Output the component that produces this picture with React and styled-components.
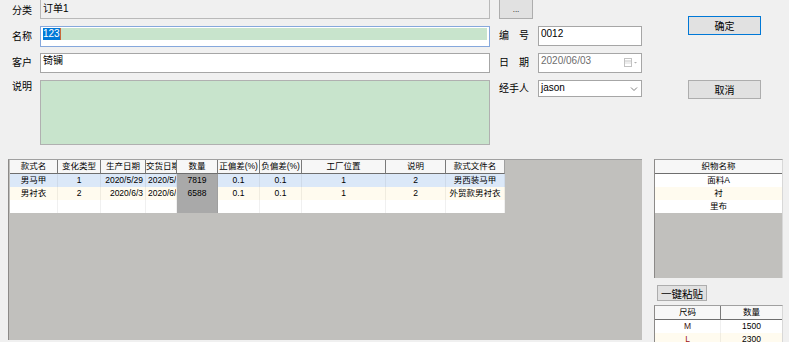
import React from 'react';
import styled, { createGlobalStyle } from 'styled-components';

const GlobalStyle = createGlobalStyle`
  html, body {
    margin: 0;
    padding: 0;
    background: #f0f0f0;
    overflow: hidden;
  }
  body {
    font-family: "Liberation Sans", "Noto Sans CJK SC", sans-serif;
    color: #000;
  }
  * {
    box-sizing: border-box;
  }
`;

const Window = styled.div`
  width: 789px;
  height: 342px;
  display: flex;
  flex-direction: column;
  background: #f0f0f0;
  overflow: hidden;
`;

const Top = styled.div`
  display: flex;
  height: 159px;
  flex-shrink: 0;
`;

const Column = styled.div`
  display: flex;
  flex-direction: column;
  flex-shrink: 0;
  width: ${p => p.$w}px;
  margin-left: ${p => p.$ml || 0}px;
  padding-left: ${p => p.$pl || 0}px;
`;

const Row = styled.div`
  display: flex;
  align-items: ${p => (p.$top ? 'flex-start' : 'center')};
  height: ${p => p.$h}px;
  margin-top: ${p => p.$mt || 0}px;
`;

const Label = styled.div`
  width: ${p => p.$w}px;
  flex-shrink: 0;
  font-size: 10px;
  line-height: 12px;
  padding-top: ${p => p.$pt || 0}px;
  white-space: pre;
`;

const Box = styled.div`
  flex: 1;
  height: 100%;
  border: 1px solid ${p => p.$border || '#ababab'};
  border-top: ${p => (p.$cut ? 'none' : `1px solid ${p.$border || '#ababab'}`)};
  background: ${p => p.$bg || '#fff'};
  color: ${p => p.$color || '#000'};
  font-size: 10px;
  line-height: 12px;
  padding: ${p => (p.$cut ? '3px 2px 0' : '1px 2px 0')};
  display: flex;
  align-items: flex-start;
  overflow: hidden;
  white-space: nowrap;
`;

const GreenBand = styled.div`
  flex: 1;
  height: 12px;
  background: #c8e4cc;
  display: flex;
  align-items: center;
`;

const Selected = styled.span`
  background: #0078d7;
  color: #fff;
  height: 12px;
  line-height: 12px;
`;

const Caret = styled.span`
  width: 1px;
  height: 12px;
  background: #c8683a;
`;

const Trailing = styled.span`
  margin-left: auto;
  display: flex;
  align-items: center;
  height: 14px;
  padding-right: 1px;
`;

const Button = styled.div`
  width: ${p => p.$w}px;
  height: ${p => p.$h}px;
  margin-top: ${p => p.$mt || 0}px;
  margin-left: ${p => p.$ml || 0}px;
  background: #e1e1e1;
  border: 1px solid ${p => (p.$primary ? '#0078d7' : '#adadad')};
  border-top: ${p => (p.$cut ? 'none' : `1px solid ${p.$primary ? '#0078d7' : '#adadad'}`)};
  font-size: ${p => p.$fs || 10}px;
  display: flex;
  align-items: center;
  justify-content: center;
  flex-shrink: 0;
`;

const Bottom = styled.div`
  flex: 1;
  display: flex;
  min-height: 0;
`;

const Workspace = styled.div`
  margin-left: 8px;
  width: 634px;
  margin-bottom: 2px;
  background: #c1c0bd;
  border-left: 1px solid #8c8a88;
  border-top: 1px solid #a0a0a0;
  padding-left: 1px;
  overflow: hidden;
  font-size: 8.5px;
`;

const GridRow = styled.div`
  display: grid;
  grid-template-columns: ${p => p.$cols};
  width: max-content;
  background: ${p => p.$bg || '#fff'};
`;

const HeadCell = styled.div`
  height: 14px;
  line-height: 13px;
  background: #f7f7f7;
  border-right: 1px solid ${p => (p.$last ? '#a0a0a0' : '#7a7a7a')};
  border-bottom: 1px solid #6e6e6e;
  text-align: center;
  overflow: hidden;
  white-space: nowrap;
`;

const Cell = styled.div`
  height: 13px;
  line-height: 13px;
  text-align: ${p => p.$align || 'center'};
  padding: 0 2px;
  background: ${p => p.$bg || 'transparent'};
  color: ${p => p.$color || '#000'};
  border-right: 1px solid rgba(0, 0, 0, 0.06);
  overflow: hidden;
  white-space: nowrap;
`;

const Side = styled.div`
  margin-left: 12px;
  width: 129px;
  display: flex;
  flex-direction: column;
  font-size: 8.5px;
`;

const SideGrid = styled.div`
  height: ${p => (p.$h ? `${p.$h}px` : 'auto')};
  flex: ${p => (p.$h ? '0 0 auto' : '1')};
  margin-top: ${p => p.$mt || 0}px;
  background: #c1c0bd;
  border-left: 1px solid #8c8a88;
  border-top: 1px solid #a0a0a0;
  border-right: 1px solid #d8d8d8;
  overflow: hidden;
`;

const columns = [
  { title: '款式名', w: 48 },
  { title: '变化类型', w: 43 },
  { title: '生产日期', w: 45, align: 'right' },
  { title: '交货日期', w: 31, align: 'left' },
  { title: '数量', w: 41, qty: true },
  { title: '正偏差(%)', w: 42 },
  { title: '负偏差(%)', w: 42 },
  { title: '工厂位置', w: 84 },
  { title: '说明', w: 60 },
  { title: '款式文件名', w: 59 },
];

const rows = [
  { bg: '#dbe8f8', cells: ['男马甲', '1', '2020/5/29', '2020/5/29', '7819', '0.1', '0.1', '1', '2', '男西装马甲'] },
  { bg: '#fffbef', cells: ['男衬衣', '2', '2020/6/3', '2020/6/3', '6588', '0.1', '0.1', '1', '2', '外贸款男衬衣'] },
  { bg: '#ffffff', cells: ['', '', '', '', '', '', '', '', '', ''] },
];

const colTemplate = columns.map(c => `${c.w}px`).join(' ');

const CalendarIcon = () => (
  <svg width="14" height="9" viewBox="0 0 14 9">
    <rect x="0.5" y="0.5" width="7" height="8" fill="#fff" stroke="#c2c2c2" />
    <line x1="1" y1="3" x2="7" y2="3" stroke="#c2c2c2" />
    <line x1="1" y1="5" x2="7" y2="5" stroke="#dcdcdc" />
    <path d="M10 4 L13 4 L11.5 5.5 Z" fill="#b0b0b0" />
  </svg>
);

const Chevron = () => (
  <svg width="8" height="6" viewBox="0 0 8 6">
    <path d="M1 1.5 L4 4.5 L7 1.5" fill="none" stroke="#707070" strokeWidth="0.9" />
  </svg>
);

export default function App() {
  return (
    <Window>
      <GlobalStyle />
      <Top>
        <Column $w={490} $pl={12}>
          <Row $h={19}>
            <Label $w={28} $pt={2}>分类</Label>
            <Box $cut $bg="#f0f0f0" $border="#b9b9b9">订单1</Box>
          </Row>
          <Row $h={21} $mt={7}>
            <Label $w={28}>名称</Label>
            <Box $border="#86a8dc">
              <GreenBand>
                <Selected>123</Selected>
                <Caret />
              </GreenBand>
            </Box>
          </Row>
          <Row $h={20} $mt={6}>
            <Label $w={28}>客户</Label>
            <Box $border="#a6a6a6">锜镧</Box>
          </Row>
          <Row $h={65} $mt={7} $top>
            <Label $w={28} $pt={1}>说明</Label>
            <Box $bg="#c8e4cc" $border="#b0b0b0" />
          </Row>
        </Column>

        <Column $w={143} $ml={9}>
          <Row $h={19}>
            <Button $w={34} $h={19} $cut $fs={8}>...</Button>
          </Row>
          <Row $h={20} $mt={7}>
            <Label $w={39}>{'编　号'}</Label>
            <Box $border="#a6a6a6">0012</Box>
          </Row>
          <Row $h={20} $mt={7}>
            <Label $w={39}>{'日　期'}</Label>
            <Box $border="#a6a6a6" $color="#6d6d6d">
              2020/06/03
              <Trailing>
                <CalendarIcon />
              </Trailing>
            </Box>
          </Row>
          <Row $h={17} $mt={7}>
            <Label $w={39}>经手人</Label>
            <Box $border="#a6a6a6">
              jason
              <Trailing>
                <Chevron />
              </Trailing>
            </Box>
          </Row>
        </Column>

        <Column $w={73} $ml={46}>
          <Button $w={73} $h={19} $mt={16} $primary>确定</Button>
          <Button $w={73} $h={19} $mt={45}>取消</Button>
        </Column>
      </Top>

      <Bottom>
        <Workspace>
          <GridRow $cols={colTemplate} $bg="transparent">
            {columns.map((c, i) => (
              <HeadCell key={c.title} $last={i === columns.length - 1}>{c.title}</HeadCell>
            ))}
          </GridRow>
          {rows.map((r, ri) => (
            <GridRow key={ri} $cols={colTemplate} $bg={r.bg}>
              {r.cells.map((v, ci) => (
                <Cell
                  key={ci}
                  $align={columns[ci].align}
                  $bg={columns[ci].qty ? '#a9a9a9' : undefined}
                >
                  {v}
                </Cell>
              ))}
            </GridRow>
          ))}
        </Workspace>

        <Side>
          <SideGrid $h={119}>
            <GridRow $cols="128px" $bg="transparent">
              <HeadCell $last>织物名称</HeadCell>
            </GridRow>
            <GridRow $cols="128px"><Cell>面料A</Cell></GridRow>
            <GridRow $cols="128px" $bg="#fffbef"><Cell>衬</Cell></GridRow>
            <GridRow $cols="128px"><Cell>里布</Cell></GridRow>
          </SideGrid>
          <Button $w={50} $h={16} $mt={7} $ml={3} $fs={10.5}>一键粘贴</Button>
          <SideGrid $mt={4}>
            <GridRow $cols="66px 62px" $bg="transparent">
              <HeadCell>尺码</HeadCell>
              <HeadCell $last>数量</HeadCell>
            </GridRow>
            <GridRow $cols="66px 62px">
              <Cell $color="#3a1010">M</Cell>
              <Cell>1500</Cell>
            </GridRow>
            <GridRow $cols="66px 62px" $bg="#fffbef">
              <Cell $color="#a01414">L</Cell>
              <Cell>2300</Cell>
            </GridRow>
          </SideGrid>
        </Side>
      </Bottom>
    </Window>
  );
}
